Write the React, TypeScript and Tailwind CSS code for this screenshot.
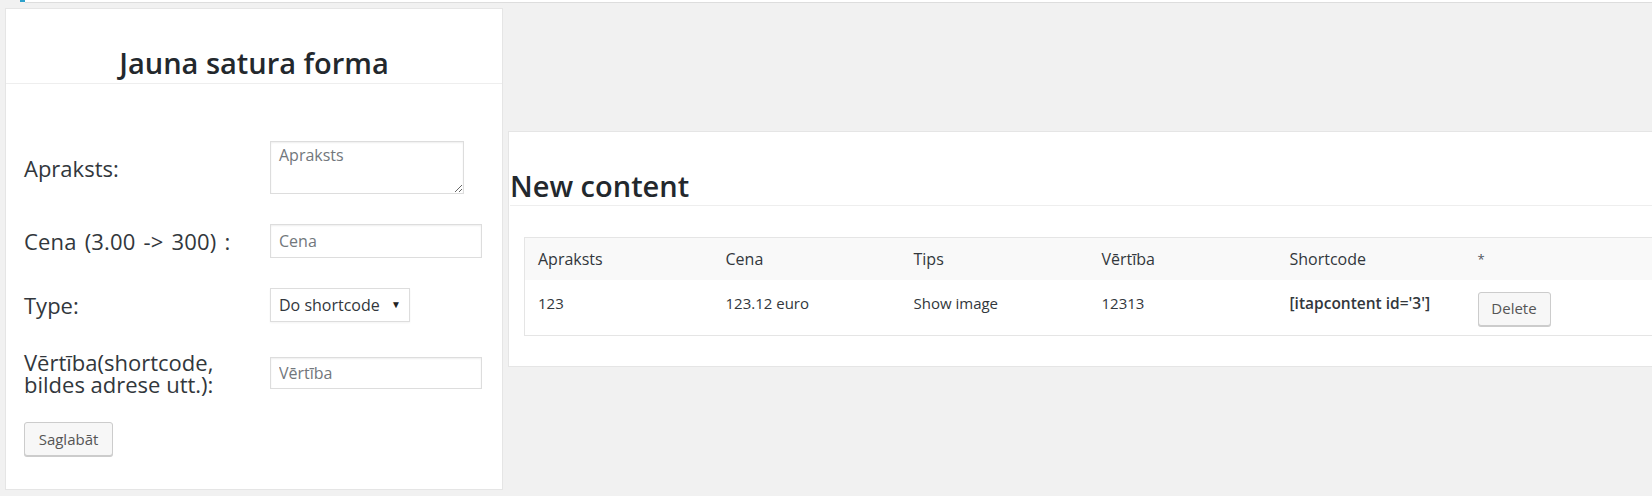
import { useState } from "react";

const font = { fontFamily: '"Open Sans", "Noto Sans", sans-serif' };

type Item = {
    apraksts: string;
    cena: string;
    tips: string;
    vertiba: string;
    shortcode: string;
};

const items: Item[] = [
    { apraksts: "123", cena: "123.12 euro", tips: "Show image", vertiba: "12313", shortcode: "[itapcontent id='3']" },
];

function FormRow({ label, children, className = "" }: { label: React.ReactNode; children: React.ReactNode; className?: string }) {
    return (
        <div className={`flex items-center ${className}`}>
            <label className="w-[246px] shrink-0 text-[22px] leading-[22px] text-[#32373c]">{label}</label>
            {children}
        </div>
    );
}

function NewForm() {
    const [type, setType] = useState("Do shortcode");

    return (
        <div className="w-[498px] h-[482px] shrink-0 bg-white border border-[#e5e5e5] flex flex-col">
            <div className="h-[75px] border-b border-[#eeeeee] flex items-end justify-center">
                <h1 className="text-[29px] font-semibold leading-none text-[#23282d] pb-[6px]">Jauna satura forma</h1>
            </div>

            <div className="pl-[18px] pt-[57px] flex flex-col">
                <FormRow label="Apraksts:">
                    <textarea
                        placeholder="Apraksts"
                        className="w-[194px] h-[53px] border border-[#dddddd] shadow-[inset_0_1px_2px_rgba(0,0,0,0.07)] px-[8px] py-[2px] text-[16px] leading-[22px] placeholder:text-[#72777c] outline-none"
                    />
                </FormRow>

                <FormRow label={<span className="tracking-[0.2px] [word-spacing:2px]">Cena (3.00 -&gt; 300) :</span>} className="mt-[30px]">
                    <input
                        placeholder="Cena"
                        className="w-[212px] h-[34px] border border-[#dddddd] shadow-[inset_0_1px_2px_rgba(0,0,0,0.07)] px-[8px] text-[16px] placeholder:text-[#72777c] outline-none"
                    />
                </FormRow>

                <FormRow label="Type:" className="mt-[30px]">
                    <div className="relative w-[140px] h-[34px] border border-[#dddddd] shadow-[0_1px_2px_rgba(0,0,0,0.05)] bg-white">
                        <select
                            value={type}
                            onChange={(e) => setType(e.target.value)}
                            className="appearance-none w-full h-full pl-[8px] pr-[20px] text-[16px] text-[#32373c] bg-transparent outline-none"
                        >
                            <option>Do shortcode</option>
                            <option>Show image</option>
                        </select>
                        <span className="absolute right-[8px] top-[8px] text-[10px] text-[#222] pointer-events-none">▼</span>
                    </div>
                </FormRow>

                <FormRow label={<>Vērtība(shortcode,<br />bildes adrese utt.):</>} className="mt-[29px] h-[44px]">
                    <input
                        placeholder="Vērtība"
                        className="w-[212px] h-[32px] border border-[#dddddd] shadow-[inset_0_1px_2px_rgba(0,0,0,0.07)] px-[8px] text-[16px] placeholder:text-[#72777c] outline-none"
                    />
                </FormRow>

                <div className="mt-[27px]">
                    <button className="w-[89px] h-[34px] bg-[#f7f7f7] border border-[#cccccc] rounded-[3px] shadow-[0_1px_0_#cccccc] text-[15px] text-[#555555]">
                        Saglabāt
                    </button>
                </div>
            </div>
        </div>
    );
}

function ContentTable() {
    const cols = ["Apraksts", "Cena", "Tips", "Vērtība", "Shortcode"];

    return (
        <div className="ml-[5px] mt-[123px] w-[1180px] h-[236px] shrink-0 bg-white border border-[#e5e5e5] pl-[1px]">
            <h2 className="h-[74px] border-b border-[#eeeeee] flex items-end text-[29px] font-semibold leading-none text-[#23282d] pb-[5px]">
                New content
            </h2>

            <table className="ml-[14px] mt-[31px] w-[1128px] border border-[#e5e5e5] border-collapse table-fixed">
                <thead>
                    <tr className="bg-[#f9f9f9] h-[42px]">
                        {cols.map((c) => (
                            <th key={c} className="w-[188px] text-left font-normal text-[16px] text-[#32373c] pl-[13px] align-middle">
                                {c}
                            </th>
                        ))}
                        <th className="w-[188px] text-left font-normal text-[13px] text-[#50575e] pl-[13px] align-middle">
                            <span className="relative top-[1px]">*</span>
                        </th>
                    </tr>
                </thead>
                <tbody>
                    {items.map((it) => (
                        <tr key={it.shortcode} className="h-[56px] bg-white">
                            <td className="pl-[13px] pt-[12px] align-top text-[15px] text-[#32373c]">{it.apraksts}</td>
                            <td className="pl-[13px] pt-[12px] align-top text-[15px] text-[#32373c]">{it.cena}</td>
                            <td className="pl-[13px] pt-[12px] align-top text-[15px] text-[#32373c]">{it.tips}</td>
                            <td className="pl-[13px] pt-[12px] align-top text-[15px] text-[#32373c]">{it.vertiba}</td>
                            <td className="pl-[13px] pt-[12px] align-top text-[15.5px] font-semibold text-[#32373c]">{it.shortcode}</td>
                            <td className="pl-[13px] pt-[12px] align-top">
                                <button className="w-[73px] h-[34px] bg-[#f7f7f7] border border-[#cccccc] rounded-[3px] shadow-[0_1px_0_#cccccc] text-[15px] text-[#555555]">
                                    Delete
                                </button>
                            </td>
                        </tr>
                    ))}
                </tbody>
            </table>
        </div>
    );
}

export default function App() {
    return (
        <div className="w-[1652px] h-[496px] bg-[#f1f1f1] overflow-hidden flex flex-col" style={font}>
            <div className="flex h-[3px] shrink-0">
                <div className="w-[20px]" />
                <div className="w-[5px] h-[2px] bg-[#2ea2cc]" />
                <div className="flex-1 h-[3px] bg-white border-b border-[#dddddd]" />
            </div>

            <div className="flex items-start pl-[5px] pt-[5px]">
                <NewForm />
                <ContentTable />
            </div>
        </div>
    );
}
